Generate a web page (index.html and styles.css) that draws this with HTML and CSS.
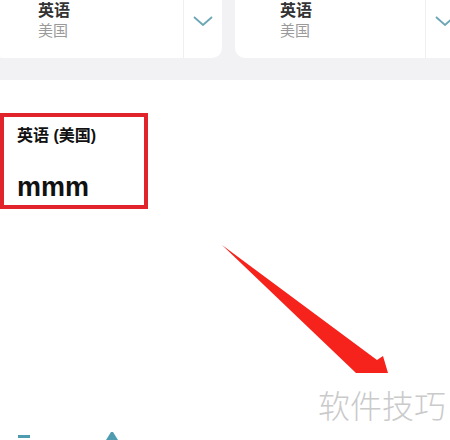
FILE: index.html
```html
<!DOCTYPE html>
<html lang="zh-CN">
  <head>
    <meta charset="utf-8" />
    <title>翻译</title>
    <link rel="stylesheet" href="styles.css">
  </head>
  <body>
    <div class="top">
      <div class="cards">
        <div class="card">
          <div class="card-lang">
            <span class="lang-name">英语</span>
            <span class="lang-region">美国</span>
          </div>
          <div class="card-arrow">
            <svg width="20" height="10" viewBox="0 0 20 10">
              <polyline points="1,1 10,9 19,1" fill="none" stroke="#6aa6b6" stroke-width="1.8" />
            </svg>
          </div>
        </div>
        <div class="card">
          <div class="card-lang">
            <span class="lang-name">英语</span>
            <span class="lang-region">美国</span>
          </div>
          <div class="card-arrow">
            <svg width="20" height="10" viewBox="0 0 20 10">
              <polyline points="1,1 10,9 19,1" fill="none" stroke="#6aa6b6" stroke-width="1.8" />
            </svg>
          </div>
        </div>
      </div>
    </div>

    <div class="result">
      <div class="result-title">英语 (美国)</div>
      <div class="result-text">mmm</div>
    </div>

    <div class="nav">
      <span class="nav-icon nav-icon-a"></span>
      <span class="nav-icon nav-icon-b"></span>
    </div>

    <!-- annotation overlay -->
    <svg class="pointer" width="450" height="440" viewBox="0 0 450 440">
      <polygon points="222,245 377,360 383,356 388,373 356,373" fill="#f5231c" />
    </svg>
    <div class="watermark">软件技巧</div>
  </body>
</html>
```

FILE: styles.css
```css
body {
  margin: 0;
  width: 450px;
  height: 440px;
  overflow: hidden;
  position: relative;
  background: #fff;
  font-family: "Liberation Sans", "Noto Sans CJK SC", sans-serif;
}

.top {
  height: 80px;
  background: #f2f2f5;
}

.cards {
  display: flex;
  gap: 13px;
  margin-left: -7px;
}

.card {
  display: flex;
  flex: 0 0 229px;
  height: 58px;
  background: #fff;
  border-radius: 0 0 10px 10px;
}

.card-lang {
  display: flex;
  flex-direction: column;
  width: 145px;
  padding: 1px 0 0 45px;
}

.lang-name {
  font-size: 16px;
  line-height: 20px;
  font-weight: bold;
  color: #333;
}

.lang-region {
  font-size: 15px;
  line-height: 20px;
  color: #9a9a9a;
}

.card-arrow {
  flex: 1;
  display: flex;
  justify-content: center;
  padding-top: 16px;
  border-left: 1px solid #efeff1;
}

.result {
  margin-top: 33px;
  width: 127px;
  height: 80px;
  padding: 8px 0 0 13px;
  border: 4px solid #e1232b;
  color: #111;
}

.result-title {
  font-size: 16px;
  line-height: 22px;
  font-weight: bold;
}

.result-text {
  margin-top: 25px;
  font-size: 27px;
  line-height: 30px;
  font-weight: bold;
}

.nav {
  display: flex;
  align-items: flex-start;
  gap: 76px;
  margin-top: 223px;
  padding-left: 18px;
}

.nav-icon {
  display: block;
}

.nav-icon-a {
  width: 12px;
  height: 8px;
  margin-top: 3px;
  border-top: 3px solid #4f9bb0;
}

.nav-icon-b {
  width: 2px;
  height: 0;
  border-left: 5px solid transparent;
  border-right: 5px solid transparent;
  border-bottom: 8px solid #4f9bb0;
}

.pointer {
  position: absolute;
  left: 0;
  top: 0;
}

.watermark {
  position: absolute;
  left: 318px;
  top: 384px;
  font-size: 32px;
  line-height: 40px;
  color: #cacaca;
  font-family: "Noto Sans CJK SC", sans-serif;
  font-weight: 300;
}
```
